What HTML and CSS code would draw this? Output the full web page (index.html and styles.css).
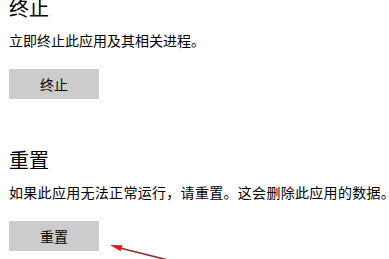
FILE: index.html
```html
<!DOCTYPE html>
<html lang="zh-CN">
<head>
<meta charset="utf-8">
<title>终止与重置</title>
<link rel="stylesheet" href="styles.css">
</head>
<body>
<div class="page">
  <section class="section">
    <h2 class="title">终止</h2>
    <p class="desc">立即终止此应用及其相关进程。</p>
    <button class="btn" type="button">终止</button>
  </section>
  <section class="section">
    <h2 class="title">重置</h2>
    <p class="desc desc-wide">如果此应用无法正常运行，请重置。这会删除此应用的数据。</p>
    <button class="btn" type="button">重置</button>
  </section>
  <svg class="arrow" width="70" height="30" viewBox="100 235 70 30" aria-hidden="true">
    <line x1="168" y1="260" x2="118" y2="247.5" stroke="#8e2b2b" stroke-width="1.6"/>
    <polygon points="110,245 122.6,245.3 120.6,251.3" fill="#e8161b"/>
  </svg>
</div>
</body>
</html>
```
FILE: styles.css
```css
html, body {
  margin: 0;
  padding: 0;
  background: #ffffff;
  overflow: hidden;
}
body {
  width: 389px;
  height: 259px;
  font-family: "Noto Sans CJK SC", "Noto Sans", sans-serif;
  color: #000000;
}
.page {
  position: relative;
  padding-left: 9px;
  margin-top: -6px;
}
.section {
  display: flex;
  flex-direction: column;
  align-items: flex-start;
  padding-bottom: 47px;
}
.title {
  margin: 0;
  font-size: 20px;
  line-height: 28px;
  font-weight: normal;
}
.desc {
  margin: 8px 0 0 0;
  font-size: 14px;
  line-height: 20px;
  white-space: nowrap;
}
.desc-wide {
  letter-spacing: 0.3px;
}
.btn {
  margin-top: 19px;
  width: 90px;
  height: 30px;
  border: none;
  padding: 0;
  background: #cccccc;
  color: #000000;
  font-family: "Noto Sans CJK SC", "Noto Sans", sans-serif;
  font-size: 14px;
  line-height: 30px;
}
.arrow {
  position: absolute;
  left: 100px;
  top: 241px;
}
```
